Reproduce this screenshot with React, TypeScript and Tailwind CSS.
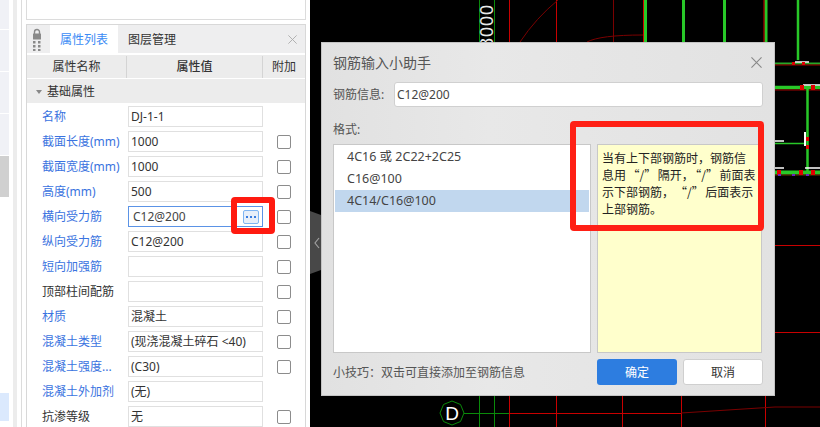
const ROWS = [
  { label: "名称", value: "DJ-1-1", blue: true, check: false },
  { label: "截面长度(mm)", value: "1000", blue: true, check: true },
  { label: "截面宽度(mm)", value: "1000", blue: true, check: true },
  { label: "高度(mm)", value: "500", blue: true, check: true },
  { label: "横向受力筋", value: "C12@200", blue: true, check: true, active: true },
  { label: "纵向受力筋", value: "C12@200", blue: true, check: true },
  { label: "短向加强筋", value: "", blue: true, check: true },
  { label: "顶部柱间配筋", value: "", blue: false, check: true },
  { label: "材质", value: "混凝土", blue: true, check: true },
  { label: "混凝土类型", value: "(现浇混凝土碎石 <40)", blue: true, check: true },
  { label: "混凝土强度...", value: "(C30)", blue: true, check: true },
  { label: "混凝土外加剂", value: "(无)", blue: true, check: false },
  { label: "抗渗等级", value: "无", blue: false, check: true },
];

const FORMATS = ["4C16 或 2C22+2C25", "C16@100", "4C14/C16@100"];

function LockGrip() {
  return (
    <svg width="8" height="23" viewBox="0 0 8 23" className="ml-[6px] mt-[3px] shrink-0">
      <path d="M1.5 6V4a2.5 2.5 0 0 1 5 0v2" fill="none" stroke="#8a8a8a" strokeWidth="1.4" />
      <rect x="0" y="5.5" width="8" height="6" rx="0.5" fill="#8a8a8a" />
      <rect x="0" y="13" width="2.5" height="2.5" fill="#8a8a8a" />
      <rect x="5" y="13" width="2.5" height="2.5" fill="#8a8a8a" />
      <rect x="0" y="17" width="2.5" height="2.5" fill="#8a8a8a" />
      <rect x="5" y="17" width="2.5" height="2.5" fill="#8a8a8a" />
      <rect x="0" y="21" width="2.5" height="2" fill="#8a8a8a" />
      <rect x="5" y="21" width="2.5" height="2" fill="#8a8a8a" />
    </svg>
  );
}

function Cross({ size, color }: { size: number; color: string }) {
  return (
    <svg width={size} height={size} viewBox="0 0 12 12">
      <path d="M0.5 0.5 11.5 11.5M11.5 0.5 0.5 11.5" stroke={color} strokeWidth="1.2" fill="none" />
    </svg>
  );
}

function PropRow({ row }: { row: (typeof ROWS)[number] }) {
  return (
    <div className="flex h-[25px] items-center">
      <div
        className={`w-[101px] shrink-0 pl-[15px] text-[12px] whitespace-nowrap ${
          row.blue ? "text-[#3a73e0]" : "text-[#333333]"
        }`}
      >
        {row.label}
      </div>
      {row.active ? (
        <div className="flex h-[21px] w-[135px] shrink-0 items-center justify-between border border-[#5b93e6] pl-[4px] pr-[3px] text-[12px] text-[#444444]">
          <span>{row.value}</span>
          <span className="flex h-[14px] w-[16px] items-center justify-center gap-[2px] rounded-[2px] border border-[#7fb5f2] bg-[#e8eff9]">
            <i className="size-[2px] bg-[#3a7de0]" />
            <i className="size-[2px] bg-[#3a7de0]" />
            <i className="size-[2px] bg-[#3a7de0]" />
          </span>
        </div>
      ) : (
        <div className="flex h-[21px] w-[135px] shrink-0 items-center border border-[#e0e0e0] pl-[2px] text-[12px] whitespace-nowrap text-[#333333]">
          {row.value}
        </div>
      )}
      <div className="flex flex-1 justify-center">
        {row.check && <span className="size-[14px] rounded-[2px] border border-[#8c8c8c] bg-white" />}
      </div>
    </div>
  );
}

function CadBackground() {
  return (
    <svg width="510" height="427" viewBox="310 0 510 427" className="block">
      <rect x="310" y="0" width="510" height="427" fill="#000" />
      {/* axis lines behind the dialog */}
      <path d="M479.5 0V427M494.5 0V427" stroke="#0a8a0a" strokeWidth="1" />
      <path d="M509.5 0V427M556.5 0V427M622.5 396V427M681.5 396V427M765.5 396V427" stroke="#c80000" strokeWidth="1" />
      <path d="M613.5 0V42" stroke="#7a0000" strokeWidth="1" />
      <path d="M520 42Q536 18 558 0M587 42Q600 35 643 35" stroke="#7a0000" strokeWidth="1" fill="none" />
      <path d="M464 413.5H509" stroke="#0a8a0a" strokeWidth="1" />
      <path d="M509 413.5H681" stroke="#c80000" strokeWidth="1" />
      <path d="M681 413 L775 407H820" stroke="#7a0000" strokeWidth="1" fill="none" />
      <path d="M775 245.5H820M775 332.5H820" stroke="#c80000" strokeWidth="1" />
      <polygon
        points="452,401 460.5,404.5 464,413 460.5,421.5 452,425 443.5,421.5 440,413 443.5,404.5"
        fill="none"
        stroke="#0a8a0a"
      />
      <text x="452" y="420" textAnchor="middle" fontSize="19" fill="#ffffff" fontFamily="Liberation Sans, sans-serif">
        D
      </text>
      <text
        transform="translate(493 4) rotate(-90)"
        textAnchor="end"
        fontSize="18"
        letterSpacing="1"
        fill="#e8e8e8"
        fontFamily="Liberation Sans, sans-serif"
      >
        18000
      </text>
      {/* wall bars */}
      <path d="M643.5 0V42" stroke="#d00000" strokeWidth="1" />
      <path d="M645.5 0V42M683.5 0V42M724.5 0V42M766 0V42" stroke="#28c828" strokeWidth="3" />
      <path d="M764 0V42" stroke="#d00000" strokeWidth="1" />
      <path d="M798 0V60" stroke="#28c828" strokeWidth="2.5" />
      <path d="M775 63.5H820" stroke="#28a828" strokeWidth="2" />
      <path d="M775 65H820" stroke="#a00000" strokeWidth="1" />
      <path d="M775 87.5H820" stroke="#28c828" strokeWidth="3.5" />
      <path d="M775 90H820" stroke="#a00000" strokeWidth="1" />
      <path d="M807.5 88V172" stroke="#28c828" strokeWidth="2.5" />
      <path d="M775 143.5H805" stroke="#28c828" strokeWidth="1.5" />
      <path d="M775 172.5H820" stroke="#28c828" strokeWidth="4" />
      <path d="M775 175H820" stroke="#6a3a00" strokeWidth="1" />
      {/* rebar marks */}
      <path d="M795 62H809M803 85H820M775 141H784M775 168H784M805 168H820" stroke="#ffffff" strokeWidth="1.5" />
      <path d="M805 132V146" stroke="#ffffff" strokeWidth="2" />
      <rect x="792" y="62" width="3" height="3" fill="#e00000" />
      <rect x="802" y="62" width="3" height="3" fill="#e00000" />
      <rect x="800" y="85" width="4" height="5" fill="#e00000" />
      <rect x="811" y="85" width="4" height="5" fill="#e00000" />
      <rect x="806" y="137" width="3" height="4" fill="#e00000" />
      <rect x="806" y="145" width="3" height="4" fill="#e00000" />
      <rect x="777" y="170" width="4" height="5" fill="#e00000" />
      <rect x="799" y="170" width="4" height="5" fill="#e00000" />
      <rect x="811" y="170" width="4" height="5" fill="#e00000" />
      <rect x="778" y="174" width="3" height="2" fill="#6a20c0" />
      <rect x="792" y="174" width="3" height="2" fill="#6a20c0" />
      <rect x="806" y="174" width="3" height="2" fill="#6a20c0" />
      {/* collapse handle */}
      <polygon points="310,211 321,215 321,270 310,274" fill="#484848" />
      <path d="M319 238 315 243 319 248" stroke="#a0a0a0" strokeWidth="1.2" fill="none" />
    </svg>
  );
}

export default function App() {
  return (
    <div className="relative flex h-[427px] w-[820px] overflow-hidden bg-white font-['Noto_Sans','Noto_Sans_CJK_SC',sans-serif]">
      {/* far left tree strip */}
      <div className="flex w-[9px] shrink-0 flex-col">
        <div className="h-[29px] bg-[#f0f1f6]" />
        <div className="mt-px h-[41px] bg-[#f0f1f6]" />
        <div className="mt-px h-[41px] bg-[#f0f1f6]" />
        <div className="mt-px h-[41px] bg-[#f0f1f6]" />
        <div className="mt-px h-[41px] bg-[#d0d0d0]" />
        <div className="mt-[196px] h-[28px] bg-[#dbe9fd]" />
      </div>
      <div className="ml-[4px] w-[4px] shrink-0 bg-[#ececec]" />
      <div className="ml-[4px] w-px shrink-0 bg-[#dcdcdc]" />

      {/* property panel */}
      <div className="ml-[4px] flex w-[280px] shrink-0 flex-col">
        <div className="h-[20px] shrink-0 border-x border-b border-[#dcdcdc]" />
        <div className="mt-[4px] flex-1 border-x border-t border-[#d8d8d8]">
          <div className="flex h-[28px] bg-[#eeeeef]">
            <LockGrip />
            <div className="ml-[9px] flex w-[68px] items-center justify-center bg-white pt-px text-[12px] text-[#3b8bf5]">
              属性列表
            </div>
            <div className="ml-[10px] flex items-center pt-px text-[12px] text-[#333333]">图层管理</div>
            <div className="ml-auto mr-[8px] flex items-center">
              <Cross size={9} color="#aaaaaa" />
            </div>
          </div>
          <div className="mt-[2px] flex h-[23px] bg-[#ececec] pt-px text-[12px] text-[#333333]">
            <div className="flex w-[100px] items-center justify-center border-r border-[#d4d4d4]">属性名称</div>
            <div className="flex w-[136px] items-center justify-center border-r border-[#d4d4d4] font-medium">属性值</div>
            <div className="flex flex-1 items-center justify-center">附加</div>
          </div>
          <div className="mt-px flex h-[24px] items-center bg-[#ececec] pt-px text-[12px] text-[#333333]">
            <span className="ml-[9px] mr-[5px] size-0 border-x-[3px] border-t-[4px] border-x-transparent border-t-[#888888]" />
            基础属性
          </div>
          <div className="pt-px">
            {ROWS.map((row) => (
              <PropRow key={row.label} row={row} />
            ))}
          </div>
        </div>
      </div>
      <div className="w-[4px] shrink-0" />

      {/* drawing canvas */}
      <div className="flex-1">
        <CadBackground />
      </div>

      {/* modal dialog */}
      <div className="absolute left-[321px] top-[42px] flex h-[354px] w-[454px] flex-col border border-[#c4c4c4] bg-linear-to-r from-[#e1e1e1] via-[#e8e8e8] via-37% to-[#e2e2e2] px-[11px] text-[12px] text-[#555555]">
        <div className="mt-[9px] flex h-[20px] items-center justify-between pr-[1px]">
          <span className="text-[14px]">钢筋输入小助手</span>
          <Cross size={11} color="#888888" />
        </div>
        <div className="mt-[10px] flex h-[25px] items-center gap-[9px]">
          <span className="w-[52px] shrink-0 whitespace-nowrap">钢筋信息:</span>
          <div className="flex h-[25px] flex-1 items-center rounded-[3px] border border-[#d0d0d0] bg-white pl-[2px] text-[#444444]">
            C12@200
          </div>
        </div>
        <div className="mt-[13px] h-[20px] leading-[20px]">格式:</div>
        <div className="mt-[4px] flex h-[209px] gap-[6px]">
          <div className="w-[258px] border border-[#c8c8c8] bg-white p-px">
            {FORMATS.map((item, i) => (
              <div
                key={item}
                className={`flex h-[22px] items-center pl-[12px] text-[12.5px] text-[#444444] ${
                  i === 2 ? "h-[20px] bg-[#c1d7ee]" : ""
                }`}
              >
                {item}
              </div>
            ))}
          </div>
          <div className="w-[165px] border border-[#c8c8c8] bg-[#ffffcc] pl-[4px] pt-[4px] font-['Noto_Sans_CJK_SC',sans-serif] text-[12px] leading-[17px] whitespace-nowrap text-[#222222]">
            当有上下部钢筋时，钢筋信
            <br />
            息用<span className="mx-[1.5px]">“/”</span>隔开，<span className="mx-[1.5px]">“/”</span>前面表
            <br />
            示下部钢筋，<span className="ml-[7px] mr-[1.5px]">“/”</span>后面表示
            <br />
            上部钢筋。
          </div>
        </div>
        <div className="mt-[6px] flex h-[26px] items-center">
          <span className="flex-1 pt-px">小技巧：双击可直接添加至钢筋信息</span>
          <button className="h-[26px] w-[80px] rounded-[3px] bg-[#2d7de0] pt-px text-[12px] text-white">确定</button>
          <button className="ml-[6px] h-[26px] w-[80px] rounded-[3px] border border-[#cfcfcf] bg-white pt-px text-[12px] text-[#333333]">
            取消
          </button>
        </div>
      </div>

      {/* red annotations */}
      <div className="absolute left-[231px] top-[197px] h-[37px] w-[44px] rounded-[4px] border-[6px] border-[#ff1a10]" />
      <div className="absolute left-[570px] top-[121px] h-[110px] w-[194px] rounded-[4px] border-[6px] border-[#ff2015]" />
    </div>
  );
}
